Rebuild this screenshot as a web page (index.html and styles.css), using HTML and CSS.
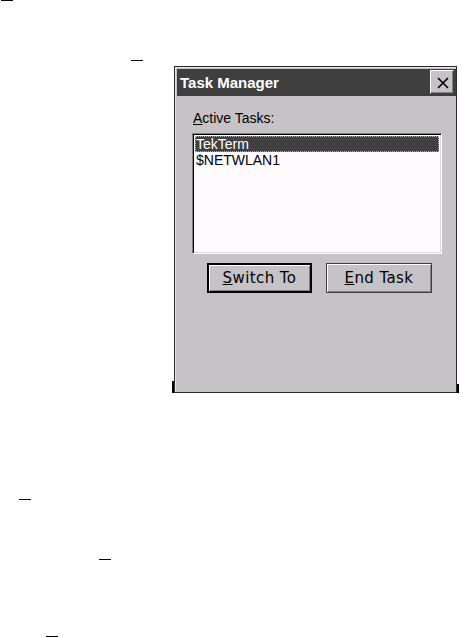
FILE: index.html
```html
<!DOCTYPE html>
<html>
<head>
<meta charset="utf-8">
<link rel="stylesheet" href="styles.css">
</head>
<body>
<div class="desktop">
  <span class="mark m1"></span>
  <span class="mark m2"></span>
  <span class="mark m3"></span>
  <span class="mark m4"></span>
  <span class="mark m5"></span>

  <div class="window">
    <span class="edge edge-l"></span>
    <span class="edge edge-r"></span>
    <div class="titlebar">
      <span class="title">Task Manager</span>
      <button class="close" type="button" aria-label="Close">
        <svg width="12" height="12" viewBox="0 0 12 12"><path d="M1 1 L11 11 M11 1 L1 11" stroke="#000" stroke-width="1.6" fill="none"/></svg>
      </button>
    </div>
    <div class="content">
      <div class="label"><u>A</u>ctive Tasks:</div>
      <div class="listbox">
        <div class="row selected">TekTerm</div>
        <div class="row">$NETWLAN1</div>
      </div>
      <div class="buttons">
        <button class="btn default" type="button"><u>S</u>witch To</button>
        <button class="btn" type="button"><u>E</u>nd Task</button>
      </div>
    </div>
  </div>
</div>
</body>
</html>
```
FILE: styles.css
```css
html, body {
  margin: 0;
  padding: 0;
  background: #ffffff;
}
.desktop {
  position: relative;
  width: 461px;
  height: 638px;
  overflow: hidden;
  font-family: "Liberation Sans", Arial, sans-serif;
}
.mark {
  position: absolute;
  width: 12px;
  height: 1px;
  background: #000;
}
.m1 { left: 1px; top: 0; }
.m2 { left: 131px; top: 60px; }
.m3 { left: 19px; top: 499px; }
.m4 { left: 99px; top: 559px; }
.m5 { left: 46px; top: 636px; }

.window {
  position: absolute;
  left: 174px;
  top: 66px;
  width: 283px;
  height: 327px;
  box-sizing: border-box;
  border: 1px solid #2a2a2a;
  background: #c6c3c6;
  box-shadow: inset 1px 1px #e6e4e6;
  padding: 2px 0 1px 2px;
  display: flex;
  flex-direction: column;
}
.edge {
  position: absolute;
  width: 2px;
  background: #000;
}
.edge-l { left: -3px; top: 314px; height: 12px; }
.edge-r { right: -3px; top: 317px; height: 9px; }

.titlebar {
  height: 27px;
  flex: none;
  background: #3f3f3f;
  display: flex;
  align-items: center;
  justify-content: space-between;
  padding-left: 3px;
}
.title {
  color: #ffffff;
  font-weight: bold;
  font-size: 15px;
  line-height: 18px;
}
.close {
  width: 24px;
  height: 24px;
  margin: 0 2px 1px 0;
  padding: 0;
  box-sizing: border-box;
  background: #c6c3c6;
  border: 1px solid;
  border-color: #ffffff #404040 #404040 #ffffff;
  box-shadow: inset -1px -1px #808080;
  display: flex;
  align-items: center;
  justify-content: center;
}
.close svg { display: block; margin: 1px 0 0 1px; }

.content {
  padding: 14px 0 0 15px;
  display: flex;
  flex-direction: column;
}
.label {
  font-size: 14px;
  line-height: 16px;
  color: #000;
  padding-left: 1px;
}
.listbox {
  margin-top: 7px;
  width: 250px;
  height: 121px;
  box-sizing: border-box;
  background: #fdfbfe;
  border: 1px solid;
  border-color: #808080 #ffffff #ffffff #808080;
  box-shadow: inset 1px 1px #000000, inset -1px -1px #dcdadc;
  padding: 2px 2px 2px 2px;
}
.row {
  height: 16px;
  font-size: 14px;
  line-height: 16px;
  padding-left: 1px;
  color: #000;
  white-space: nowrap;
}
.row.selected {
  background: #404040;
  color: #ffffff;
  outline: 1px dotted #b0b0b0;
  outline-offset: -1px;
}
.buttons {
  margin-top: 9px;
  margin-left: 15px;
  display: flex;
  gap: 14px;
}
.btn {
  height: 30px;
  padding: 0;
  box-sizing: border-box;
  background: #c6c3c6;
  font-family: "DejaVu Sans", Verdana, sans-serif;
  font-size: 15px;
  letter-spacing: 0.4px;
  color: #000;
  border: 1px solid #404040;
  box-shadow: inset 1px 1px #ffffff, inset -1px -1px #808080;
  width: 106px;
}
.btn.default {
  width: 105px;
  border: 2px solid #000;
}
```
